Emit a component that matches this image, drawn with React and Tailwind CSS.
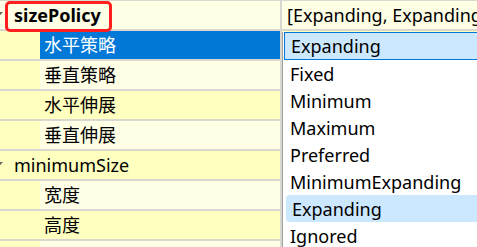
const FONT = {
  fontFamily: '"Noto Sans", "Noto Sans CJK SC", sans-serif',
};

const rows = [
  { label: "sizePolicy", top: true, bold: true, tone: "light" },
  { label: "水平策略", selected: true, tone: "dark" },
  { label: "垂直策略", tone: "light" },
  { label: "水平伸展", tone: "dark" },
  { label: "垂直伸展", tone: "light" },
  { label: "minimumSize", top: true, tone: "dark" },
  { label: "宽度", tone: "light" },
  { label: "高度", tone: "dark" },
  { label: "", tone: "light" },
];

const options = [
  "Expanding",
  "Fixed",
  "Minimum",
  "Maximum",
  "Preferred",
  "MinimumExpanding",
  "Expanding",
  "Ignored",
];

function Row({ row, first }) {
  const bg = row.tone === "dark" ? "bg-[#ffffbf]" : "bg-[#ffffe6]";
  return (
    <div
      className={`flex shrink-0 border-b-2 border-[#d8d8d0] ${
        first ? "h-[31px] border-t border-t-[#d8d8d0]" : "h-[30px]"
      }`}
    >
      <div className={`relative flex w-[280px] items-center ${row.top ? bg : ""}`}>
        {row.top ? (
          <>
            <svg
              className="absolute -left-[6px] top-1/2 -translate-y-1/2"
              width="9"
              height="6"
              viewBox="0 0 9 6"
            >
              <path d="M0 0 L9 0 L4.5 5 Z" fill="#666" />
            </svg>
            <span
              className={`pl-[14px] text-[18px] leading-none text-black ${
                row.bold ? "font-bold" : ""
              }`}
            >
              {row.label}
            </span>
          </>
        ) : (
          <>
            <div className="h-full w-[40px] bg-[#ffffbf]" />
            <div
              className={`flex h-full flex-1 items-center pl-[4px] text-[18px] leading-none ${
                row.selected ? "bg-[#0078d7] text-white" : `${bg} text-black`
              }`}
            >
              {row.label}
            </div>
          </>
        )}
      </div>
      <div className="w-[2px] bg-[#d8d8d0]" />
      <div className={`flex flex-1 items-center overflow-hidden whitespace-nowrap pl-[5px] ${bg}`}>
        {row.top && row.bold && (
          <span className="text-[18px] leading-none text-black">
            [Expanding, Expanding]
          </span>
        )}
      </div>
    </div>
  );
}

export default function App() {
  return (
    <div
      className="relative h-[247px] w-[477px] overflow-hidden bg-[#ffffe6]"
      style={FONT}
    >
      <div className="flex flex-col">
        {rows.map((row, i) => (
          <Row key={i} row={row} first={i === 0} />
        ))}
      </div>

      <div className="absolute left-[5px] top-[1px] h-[31px] w-[107px] rounded-[5px] border-[3px] border-[#ff1f1f]" />

      <div className="absolute left-[282px] top-[32px] h-[230px] w-[200px] border-l border-[#a0a0a0] bg-white pt-[1px]">
        {options.map((opt, i) => (
          <div
            key={i}
            className={`flex h-[27px] items-center whitespace-nowrap pl-[6px] text-[18px] leading-none text-black ${
              i === 0
                ? "-mt-px ml-px h-[28px] border border-[#0078d7] bg-[#cce8ff]"
                : i === 6
                ? "ml-[3px] rounded-l-[4px] bg-[#cce8ff] pl-[4px]"
                : "ml-px"
            }`}
          >
            {opt}
          </div>
        ))}
      </div>
    </div>
  );
}
